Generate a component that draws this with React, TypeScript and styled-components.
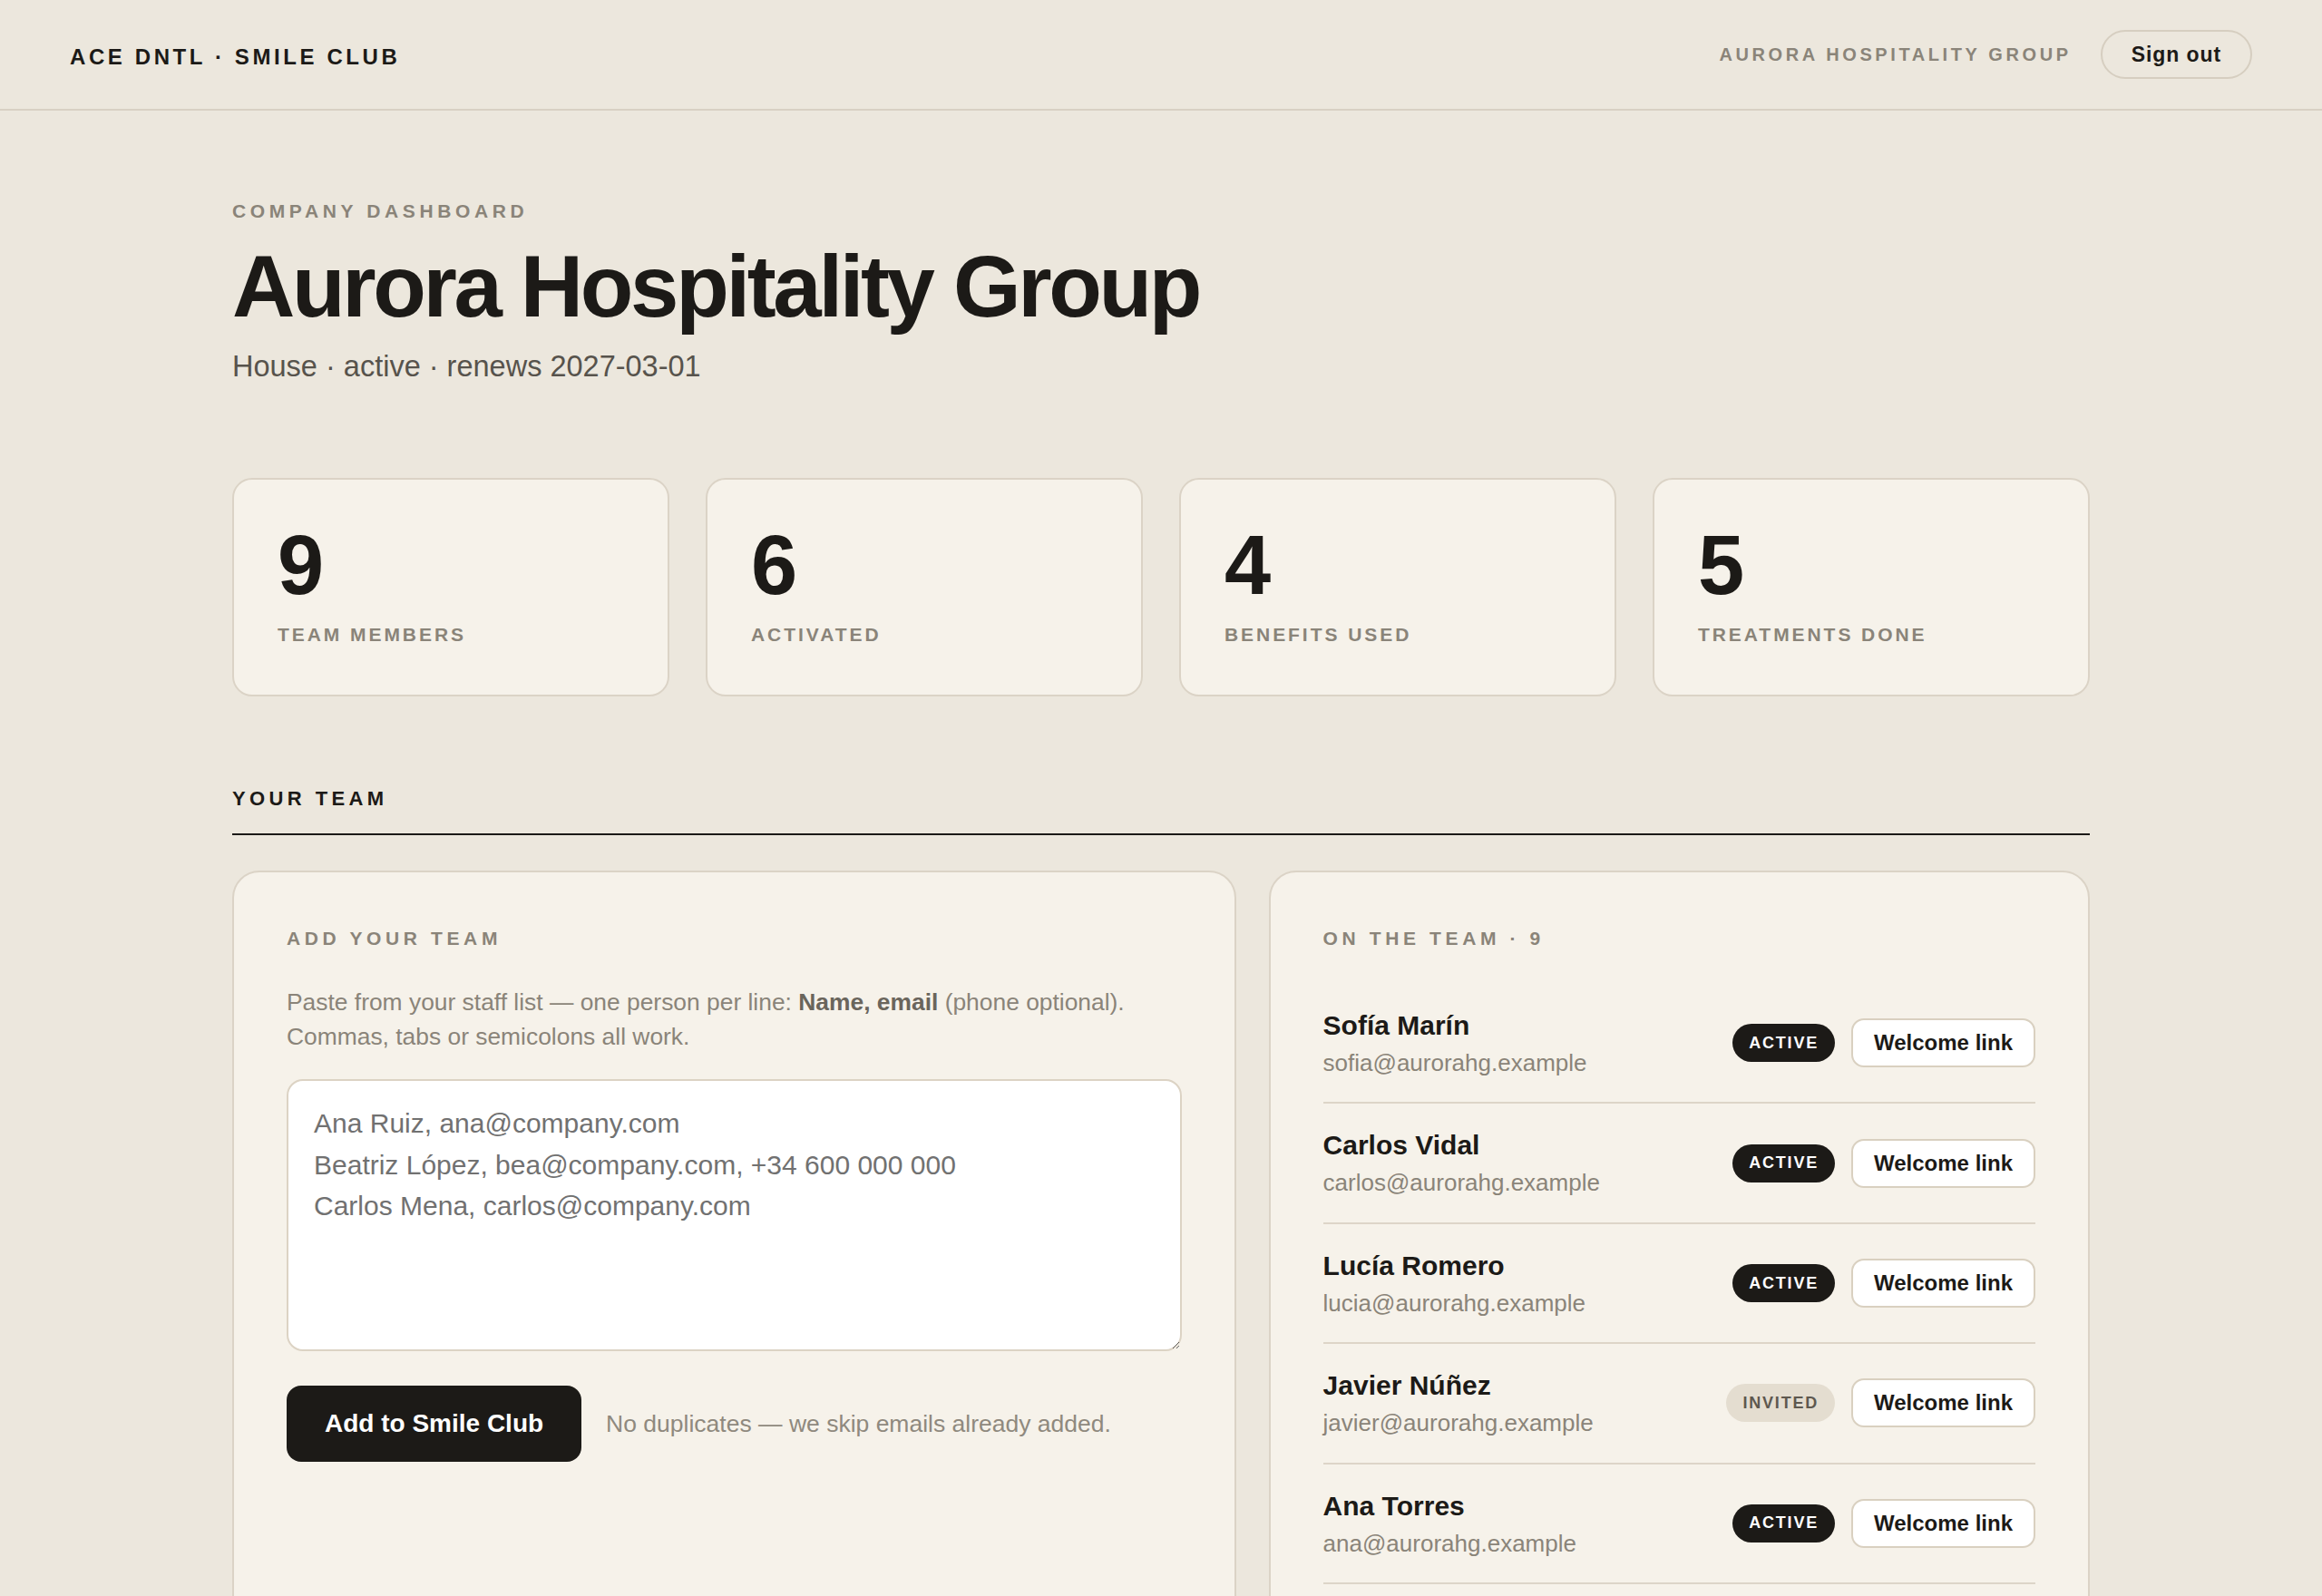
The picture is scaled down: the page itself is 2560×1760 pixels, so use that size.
import styled, { createGlobalStyle } from "styled-components";

type Status = "active" | "invited";

type Member = {
  name: string;
  email: string;
  status: Status;
};

const stats = [
  { value: 9, label: "Team members" },
  { value: 6, label: "Activated" },
  { value: 4, label: "Benefits used" },
  { value: 5, label: "Treatments done" },
];

const members: Member[] = [
  { name: "Sofía Marín", email: "sofia@aurorahg.example", status: "active" },
  { name: "Carlos Vidal", email: "carlos@aurorahg.example", status: "active" },
  { name: "Lucía Romero", email: "lucia@aurorahg.example", status: "active" },
  { name: "Javier Núñez", email: "javier@aurorahg.example", status: "invited" },
  { name: "Ana Torres", email: "ana@aurorahg.example", status: "active" },
  { name: "Pablo Herrera", email: "pablo@aurorahg.example", status: "active" },
  { name: "Elena Castro", email: "elena@aurorahg.example", status: "invited" },
  { name: "Miguel Ortega", email: "miguel@aurorahg.example", status: "active" },
  { name: "Laura Gil", email: "laura@aurorahg.example", status: "invited" },
];

const placeholder = [
  "Ana Ruiz, ana@company.com",
  "Beatriz López, bea@company.com, +34 600 000 000",
  "Carlos Mena, carlos@company.com",
].join("\n");

export default function App() {
  return (
    <>
      <GlobalStyle />
      <Page>
        <TopBar>
          <Brand>ACE DNTL · SMILE CLUB</Brand>
          <TopBarRight>
            <CompanyTag>Aurora Hospitality Group</CompanyTag>
            <SignOut>Sign out</SignOut>
          </TopBarRight>
        </TopBar>

        <Main>
          <Eyebrow>Company dashboard</Eyebrow>
          <Title>Aurora Hospitality Group</Title>
          <Subtitle>House · active · renews 2027-03-01</Subtitle>

          <Stats>
            {stats.map((s) => (
              <StatCard key={s.label}>
                <StatValue>{s.value}</StatValue>
                <StatLabel>{s.label}</StatLabel>
              </StatCard>
            ))}
          </Stats>

          <SectionHeader>
            <SectionTitle>Your team</SectionTitle>
          </SectionHeader>

          <Panels>
            <Panel>
              <Eyebrow>Add your team</Eyebrow>
              <Help>
                Paste from your staff list — one person per line:{" "}
                <strong>Name, email</strong> (phone optional).
                <br />
                Commas, tabs or semicolons all work.
              </Help>
              <Paste placeholder={placeholder} />
              <Actions>
                <PrimaryButton>Add to Smile Club</PrimaryButton>
                <Note>No duplicates — we skip emails already added.</Note>
              </Actions>
            </Panel>

            <Panel>
              <Eyebrow>On the team · {members.length}</Eyebrow>
              <MemberList>
                {members.map((m) => (
                  <MemberRow key={m.email}>
                    <div>
                      <MemberName>{m.name}</MemberName>
                      <MemberEmail>{m.email}</MemberEmail>
                    </div>
                    <RowActions>
                      <Badge $status={m.status}>{m.status}</Badge>
                      <LinkButton>Welcome link</LinkButton>
                    </RowActions>
                  </MemberRow>
                ))}
              </MemberList>
            </Panel>
          </Panels>
        </Main>
      </Page>
    </>
  );
}

const GlobalStyle = createGlobalStyle`
  *, *::before, *::after {
    box-sizing: border-box;
  }

  body {
    margin: 0;
    background: #ece7dd;
  }
`;

const Page = styled.div`
  min-height: 100vh;
  background: #ece7dd;
  color: #1c1a17;
  font-family: "Liberation Sans", Arial, Helvetica, sans-serif;
`;

const TopBar = styled.header`
  display: flex;
  align-items: center;
  justify-content: space-between;
  height: 122px;
  padding: 0 77px;
  border-bottom: 2px solid #d8d0c3;
`;

const Brand = styled.div`
  padding-top: 5px;
  font-size: 24px;
  font-weight: 700;
  letter-spacing: 0.15em;
`;

const TopBarRight = styled.div`
  display: flex;
  align-items: center;
  gap: 32px;
`;

const CompanyTag = styled.span`
  font-size: 20px;
  font-weight: 700;
  letter-spacing: 0.18em;
  text-transform: uppercase;
  color: #8a8479;
`;

const SignOut = styled.button`
  height: 54px;
  padding: 0 32px;
  border: 2px solid #d6cec0;
  border-radius: 999px;
  background: transparent;
  font-family: inherit;
  font-size: 23px;
  font-weight: 700;
  letter-spacing: 0.04em;
  color: #1c1a17;
  cursor: pointer;
`;

const Main = styled.main`
  max-width: 2048px;
  margin: 0 auto;
  padding-top: 98px;
`;

const Eyebrow = styled.div`
  margin: 0;
  font-size: 21px;
  line-height: 1.2;
  font-weight: 700;
  letter-spacing: 0.22em;
  text-transform: uppercase;
  color: #8a8479;
`;

const Title = styled.h1`
  margin: 18px 0 0;
  font-size: 96px;
  line-height: 1.1;
  font-weight: 700;
  letter-spacing: -0.035em;
`;

const Subtitle = styled.p`
  margin: 13px 0 0;
  font-size: 32.5px;
  line-height: 1.4;
  color: #57534c;
`;

const Stats = styled.section`
  display: grid;
  grid-template-columns: repeat(4, 1fr);
  gap: 40px;
  margin-top: 100px;
`;

const StatCard = styled.div`
  padding: 48px 48px 54px;
  background: #f6f2ea;
  border: 2px solid #dbd3c6;
  border-radius: 22px;
`;

const StatValue = styled.div`
  font-size: 92px;
  line-height: 1;
  font-weight: 700;
  letter-spacing: -0.02em;
`;

const StatLabel = styled.div`
  margin-top: 18px;
  font-size: 21px;
  line-height: 1.2;
  font-weight: 700;
  letter-spacing: 0.14em;
  text-transform: uppercase;
  color: #8a8479;
`;

const SectionHeader = styled.div`
  margin-top: 100px;
  padding-bottom: 24px;
  border-bottom: 2px solid #1c1a17;
`;

const SectionTitle = styled.h2`
  margin: 0;
  font-size: 22px;
  line-height: 1.2;
  font-weight: 700;
  letter-spacing: 0.2em;
  text-transform: uppercase;
`;

const Panels = styled.section`
  display: grid;
  grid-template-columns: 11fr 9fr;
  gap: 36px;
  margin-top: 39px;
`;

const Panel = styled.div`
  padding: 60px 58px;
  background: #f6f2ea;
  border: 2px solid #dbd3c6;
  border-radius: 30px;
`;

const Help = styled.p`
  margin: 39px 0 0;
  font-size: 26.4px;
  line-height: 38px;
  color: #8a8479;

  strong {
    color: #6a655c;
  }
`;

const Paste = styled.textarea`
  display: block;
  width: 100%;
  height: 300px;
  margin-top: 28px;
  padding: 24px 28px;
  background: #fff;
  border: 2px solid #dcd3c4;
  border-radius: 18px;
  font-family: inherit;
  font-size: 30px;
  line-height: 45.5px;
  color: #1c1a17;
  outline: none;

  &::placeholder {
    color: #717171;
    opacity: 1;
  }
`;

const Actions = styled.div`
  display: flex;
  align-items: center;
  gap: 27px;
  margin-top: 38px;
`;

const PrimaryButton = styled.button`
  height: 84px;
  padding: 0 42px;
  border: none;
  border-radius: 16px;
  background: #1c1a17;
  color: #fff;
  font-family: inherit;
  font-size: 28px;
  font-weight: 700;
  cursor: pointer;
`;

const Note = styled.span`
  font-size: 26.5px;
  color: #8f897e;
`;

const MemberList = styled.div`
  margin-top: 38px;
`;

const MemberRow = styled.div`
  display: flex;
  align-items: center;
  justify-content: space-between;
  padding: 25px 0;
  border-bottom: 2px solid #ddd5c8;
`;

const MemberName = styled.div`
  font-size: 30px;
  line-height: 1.4;
  font-weight: 700;
`;

const MemberEmail = styled.div`
  margin-top: 2px;
  font-size: 26px;
  line-height: 1.4;
  color: #8a8479;
`;

const RowActions = styled.div`
  display: flex;
  align-items: center;
  gap: 18px;
`;

const Badge = styled.span<{ $status: Status }>`
  display: inline-flex;
  align-items: center;
  height: 42px;
  padding: 0 18px;
  border-radius: 999px;
  background: ${(p) => (p.$status === "active" ? "#1c1a17" : "#e4ddd0")};
  color: ${(p) => (p.$status === "active" ? "#fff" : "#5e584f")};
  font-size: 18px;
  font-weight: 700;
  letter-spacing: 0.1em;
  text-transform: uppercase;
`;

const LinkButton = styled.button`
  height: 54px;
  padding: 0 23px;
  background: #fff;
  border: 2px solid #d9d0c0;
  border-radius: 14px;
  font-family: inherit;
  font-size: 24px;
  font-weight: 700;
  color: #1c1a17;
  cursor: pointer;
`;
